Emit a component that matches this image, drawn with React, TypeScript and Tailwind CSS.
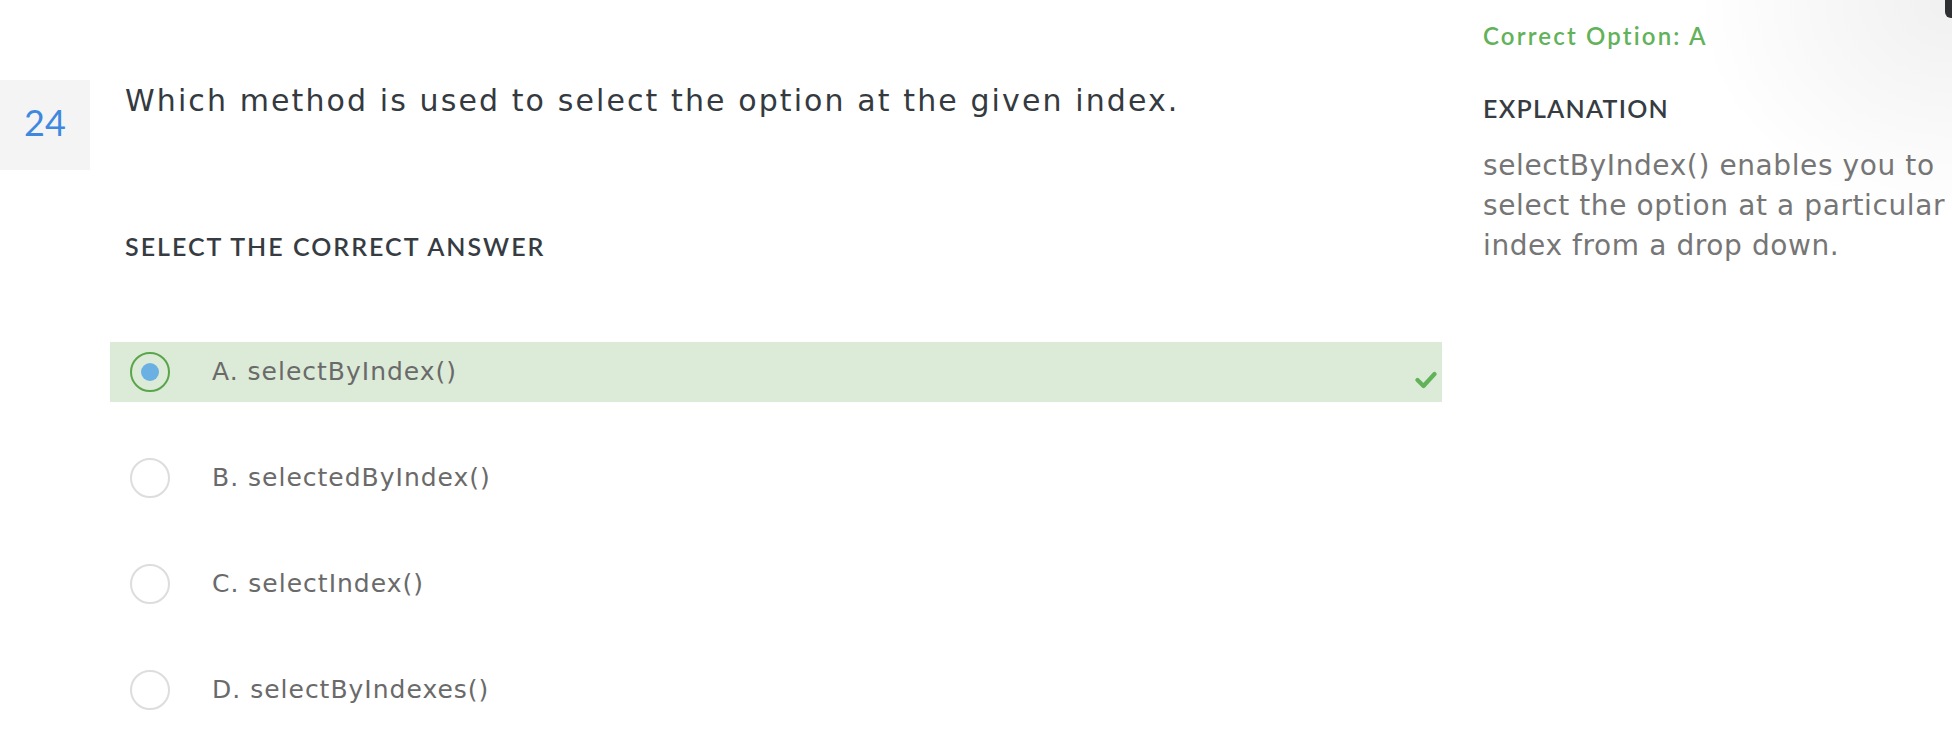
import React from "react";

const options = [
  { key: "A", label: "A. selectByIndex()", correct: true },
  { key: "B", label: "B. selectedByIndex()", correct: false },
  { key: "C", label: "C. selectIndex()", correct: false },
  { key: "D", label: "D. selectByIndexes()", correct: false },
];

const body = { fontFamily: "'DejaVu Sans', Verdana, sans-serif" };
const head = { fontFamily: "Lato, 'Open Sans', sans-serif" };

export default function App() {
  return (
    <div className="relative w-full h-[744px] bg-white overflow-hidden flex" style={head}>
      {/* top-right corner shadow + dark tab */}
      <div className="absolute top-0 right-0 w-[260px] h-[220px] bg-[radial-gradient(ellipse_at_top_right,rgba(0,0,0,0.06),rgba(0,0,0,0)_70%)] pointer-events-none" />
      <div className="absolute top-0 right-0 w-[7px] h-[18px] bg-[#2f3033] rounded-bl-[6px]" />

      {/* left number box */}
      <div className="pt-[80px] w-[110px] shrink-0">
        <div className="w-[90px] h-[90px] bg-[#f4f4f4] flex items-center justify-center">
          <span className="mb-[6px] text-[36px] font-normal text-[#3f88e0] leading-none">24</span>
        </div>
      </div>

      {/* main column */}
      <div className="w-[1332px] shrink-0 flex flex-col">
        <h1
          className="mt-[81px] pl-[15px] text-[30px] leading-[40px] text-[#343a40] tracking-[2.1px] font-normal whitespace-nowrap"
          style={body}
        >
          Which method is used to select the option at the given index.
        </h1>
        <div className="mt-[110px] pl-[15px] text-[25px] leading-[30px] font-semibold text-[#363c42] tracking-[0.08em]">
          SELECT THE CORRECT ANSWER
        </div>
        <div className="mt-[81px] flex flex-col gap-[46px]">
          {options.map((o) => (
            <div
              key={o.key}
              className={
                o.correct
                  ? "h-[60px] flex items-center pl-[20px] pr-[5px] bg-[#dcebd7]"
                  : "h-[60px] flex items-center pl-[20px] pr-[5px]"
              }
            >
              {o.correct ? (
                <div className="w-[40px] h-[40px] rounded-full border-2 border-[#5aa54b] flex items-center justify-center">
                  <div className="w-[18px] h-[18px] rounded-full bg-[#6bb0e2]" />
                </div>
              ) : (
                <div className="w-[40px] h-[40px] rounded-full border-2 border-[#dddddd] bg-white" />
              )}
              <span className="ml-[42px] text-[25px] text-[#6a6a6a] tracking-[1px]" style={body}>
                {o.label}
              </span>
              {o.correct && (
                <svg className="ml-auto mt-[16px]" width="22" height="18" viewBox="0 0 22 18">
                  <polyline
                    points="2.5,9 8.5,15 19.5,3"
                    fill="none"
                    stroke="#62b25a"
                    strokeWidth="4.2"
                    strokeLinecap="round"
                    strokeLinejoin="round"
                  />
                </svg>
              )}
            </div>
          ))}
        </div>
      </div>

      {/* right column */}
      <div className="ml-[41px] flex-1 flex flex-col">
        <div className="mt-[21px] text-[24px] leading-[30px] font-semibold text-[#62b25a] tracking-[0.09em]">
          Correct Option: A
        </div>
        <div className="mt-[42px] text-[25px] leading-[30px] font-semibold text-[#363c42] tracking-[0.05em]">
          EXPLANATION
        </div>
        <p className="mt-[23px] text-[28px] leading-[40px] text-[#767676] tracking-[0.6px]" style={body}>
          selectByIndex() enables you to select the option at a particular index from a drop down.
        </p>
      </div>
    </div>
  );
}
